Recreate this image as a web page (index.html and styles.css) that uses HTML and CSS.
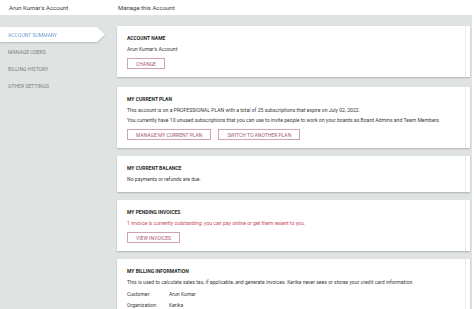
FILE: index.html
```html
<!DOCTYPE html>
<html>
<head>
<meta charset="utf-8">
<link rel="stylesheet" href="styles.css">
</head>
<body>
<div class="header">
  <div class="h-left">Arun Kumar's Account</div>
  <div class="h-right">Manage this Account</div>
</div>
<div class="layout">
  <div class="sidebar">
    <div class="nav-active-wrap"><div class="nav-item active">ACCOUNT SUMMARY</div></div>
    <div class="nav-item">MANAGE USERS</div>
    <div class="nav-item">BILLING HISTORY</div>
    <div class="nav-item">OTHER SETTINGS</div>
  </div>
  <div class="main">
    <div class="card card-first">
      <div class="card-title">ACCOUNT NAME</div>
      <p class="text">Arun Kumar's Account</p>
      <div class="btn-row"><span class="btn">CHANGE</span></div>
    </div>
    <div class="card">
      <div class="card-title">MY CURRENT PLAN</div>
      <p class="text">This account is on a PROFESSIONAL PLAN with a total of 25 subscriptions that expire on July 02, 2022.</p>
      <p class="text">You currently have 10 unused subscriptions that you can use to invite people to work on your boards as Board Admins and Team Members.</p>
      <div class="btn-row"><span class="btn">MANAGE MY CURRENT PLAN</span><span class="btn">SWITCH TO ANOTHER PLAN</span></div>
    </div>
    <div class="card">
      <div class="card-title">MY CURRENT BALANCE</div>
      <p class="text">No payments or refunds are due.</p>
    </div>
    <div class="card">
      <div class="card-title">MY PENDING INVOICES</div>
      <p class="text alert">1 invoice is currently outstanding: you can pay online or get them resent to you.</p>
      <div class="btn-row"><span class="btn">VIEW INVOICES</span></div>
    </div>
    <div class="card">
      <div class="card-title">MY BILLING INFORMATION</div>
      <p class="text">This is used to calculate sales tax, if applicable, and generate invoices. Kerika never sees or stores your credit card information.</p>
      <div class="info-rows">
        <div class="info-row"><span class="info-label">Customer:</span><span class="info-value">Arun Kumar</span></div>
        <div class="info-row"><span class="info-label">Organization:</span><span class="info-value">Kerika</span></div>
      </div>
    </div>
  </div>
</div>
</body>
</html>
```
FILE: styles.css
```css
html, body {
  margin: 0;
  padding: 0;
  height: 100%;
  overflow: hidden;
}
body {
  background: #ffffff;
  font-family: Roboto, "Liberation Sans", sans-serif;
  color: #333;
}
.header {
  height: 15px;
  background: #fff;
  display: flex;
  align-items: center;
  font-size: 6px;
  color: #3a3a3a;
}
.h-left {
  width: 109px;
  padding-left: 9px;
}
.h-right {
  padding-left: 0;
}
.layout {
  display: grid;
  grid-template-columns: 117px 1fr;
  background: #dfe3e2;
  margin-right: 2px;
  height: 294px;
}
.sidebar {
  padding-top: 11px;
}
.nav-item {
  height: 17px;
  display: flex;
  align-items: center;
  padding-left: 8px;
  font-size: 5px;
  color: #7d8283;
  letter-spacing: 0.05px;
}
.nav-active-wrap {
  filter: drop-shadow(0 1px 1px rgba(0, 0, 0, 0.18));
  height: 17px;
  display: flex;
  align-items: center;
}
.nav-item.active {
  height: 15px;
  width: 97px;
  padding-right: 8px;
  background: #fff;
  color: #6b9bd0;
  clip-path: polygon(0 0, 97px 0, 105px 50%, 97px 100%, 0 100%);
}
.main {
  padding: 11px 2px 0 0;
  display: flex;
  flex-direction: column;
  gap: 8px;
}
.card {
  background: #fff;
  box-shadow: inset -4px 0 0 #fff, inset -5px 0 0 #ebebeb, 0 1px 1.5px rgba(0, 0, 0, 0.22);
  padding: 7px 10px 8px 10px;
}
.card-first {
  margin-bottom: 2px;
}
.card-title {
  font-size: 5px;
  font-weight: bold;
  line-height: 10px;
  color: #2a2a2a;
  margin-bottom: 1px;
}
.text {
  margin: 0;
  font-size: 5.1px;
  line-height: 10px;
  color: #3a3a3a;
  white-space: nowrap;
}
.text.alert {
  color: #c8485a;
}
.btn-row {
  display: flex;
  gap: 7px;
  margin-top: 4px;
}
.btn {
  height: 11px;
  box-sizing: border-box;
  border: 1px solid #cfa3b1;
  color: #a9587a;
  font-size: 5px;
  display: flex;
  align-items: center;
  padding: 0 8px;
}
.info-rows {
  margin-top: 2px;
  display: flex;
  flex-direction: column;
  gap: 1px;
}
.info-row {
  display: flex;
  font-size: 5.1px;
  line-height: 10px;
  color: #3a3a3a;
}
.info-label {
  width: 42px;
}
```
